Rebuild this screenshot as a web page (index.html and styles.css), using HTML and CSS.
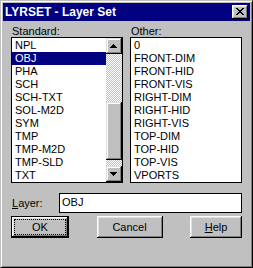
FILE: index.html
```html
<!DOCTYPE html>
<html lang="en">
<head>
    <meta charset="UTF-8">
    <title>LYRSET - Layer Set</title>
    <link rel="stylesheet" href="styles.css">
</head>
<body>
<!--dialog window-->
<div class="window">
    <!--title bar-->
    <div class="titlebar">
        <span class="title">LYRSET - Layer Set</span>
        <span class="close">
            <svg width="8" height="7" viewBox="0 0 8 7" shape-rendering="crispEdges">
                <rect x="0" y="0" width="2" height="1"/><rect x="6" y="0" width="2" height="1"/>
                <rect x="1" y="1" width="2" height="1"/><rect x="5" y="1" width="2" height="1"/>
                <rect x="2" y="2" width="4" height="1"/>
                <rect x="3" y="3" width="2" height="1"/>
                <rect x="2" y="4" width="4" height="1"/>
                <rect x="1" y="5" width="2" height="1"/><rect x="5" y="5" width="2" height="1"/>
                <rect x="0" y="6" width="2" height="1"/><rect x="6" y="6" width="2" height="1"/>
            </svg>
        </span>
    </div>
    <div class="content">
        <!--two lists-->
        <div class="lists">
            <div class="group">
                <div class="label">Standard:</div>
                <div class="listbox">
                    <ul class="items">
                        <li>NPL</li>
                        <li class="selected">OBJ</li>
                        <li>PHA</li>
                        <li>SCH</li>
                        <li>SCH-TXT</li>
                        <li>SOL-M2D</li>
                        <li>SYM</li>
                        <li>TMP</li>
                        <li>TMP-M2D</li>
                        <li>TMP-SLD</li>
                        <li>TXT</li>
                    </ul>
                    <div class="scrollbar">
                        <span class="sb_btn">
                            <svg width="7" height="4" viewBox="0 0 7 4" shape-rendering="crispEdges">
                                <rect x="3" y="0" width="1" height="1"/><rect x="2" y="1" width="3" height="1"/>
                                <rect x="1" y="2" width="5" height="1"/><rect x="0" y="3" width="7" height="1"/>
                            </svg>
                        </span>
                        <div class="sb_track"><span class="sb_thumb"></span></div>
                        <span class="sb_btn">
                            <svg width="7" height="4" viewBox="0 0 7 4" shape-rendering="crispEdges">
                                <rect x="0" y="0" width="7" height="1"/><rect x="1" y="1" width="5" height="1"/>
                                <rect x="2" y="2" width="3" height="1"/><rect x="3" y="3" width="1" height="1"/>
                            </svg>
                        </span>
                    </div>
                </div>
            </div>
            <div class="group">
                <div class="label">Other:</div>
                <div class="listbox">
                    <ul class="items">
                        <li>0</li>
                        <li>FRONT-DIM</li>
                        <li>FRONT-HID</li>
                        <li>FRONT-VIS</li>
                        <li>RIGHT-DIM</li>
                        <li>RIGHT-HID</li>
                        <li>RIGHT-VIS</li>
                        <li>TOP-DIM</li>
                        <li>TOP-HID</li>
                        <li>TOP-VIS</li>
                        <li>VPORTS</li>
                    </ul>
                </div>
            </div>
        </div>
        <!--layer name-->
        <div class="layer_row">
            <span class="layer_label"><u>L</u>ayer:</span>
            <div class="edit">OBJ</div>
        </div>
        <!--buttons-->
        <div class="buttons">
            <div class="btn btn_default"><span class="focus">OK</span></div>
            <div class="btn btn_cancel">Cancel</div>
            <div class="btn btn_help"><u>H</u>elp</div>
        </div>
    </div>
</div>
</body>
</html>
```

FILE: styles.css
```css
*{
    margin: 0;
    padding: 0;
    box-sizing: border-box;
}
body
{
    background: #c0c0c0;
    font-family: "Liberation Sans", Arial, sans-serif;
    font-size: 11px;
    color: #000;
}
ul
{
    list-style: none;
}
u
{
    text-underline-offset: 1px;
}
.window
{
    width: 253px;
    height: 268px;
    background: #c0c0c0;
    border: 1px solid;
    border-color: #c0c0c0 #000 #000 #c0c0c0;
    box-shadow: inset 1px 1px #fff, inset -1px -1px #808080;
    padding: 2px;
}
.titlebar
{
    height: 18px;
    background: #000080;
    display: flex;
    justify-content: space-between;
    align-items: flex-start;
    padding: 0 2px 0 2px;
}
.title
{
    color: #fff;
    font-weight: bold;
    font-size: 12px;
    line-height: 18px;
}
.close
{
    width: 16px;
    height: 14px;
    margin-top: 2px;
    background: #c0c0c0;
    box-shadow: inset -1px -1px #000, inset 1px 1px #fff, inset -2px -2px #808080, inset 2px 2px #dfdfdf;
    display: flex;
    align-items: center;
    justify-content: center;
    padding: 0 1px 1px 0;
}
.content
{
    padding: 4px 8px 0 8px;
}
.lists
{
    display: grid;
    grid-template-columns: 112px 112px;
    column-gap: 7px;
}
.label
{
    line-height: 12px;
    padding-left: 1px;
}
.listbox
{
    height: 146px;
    background: #fff;
    border: 1px solid #000;
    display: flex;
}
.items
{
    flex: 1;
    padding-top: 1px;
}
.items li
{
    line-height: 13px;
    height: 13px;
    padding-left: 3px;
    white-space: nowrap;
}
.items .selected
{
    background: #000080;
    color: #fff;
}
.scrollbar
{
    width: 16px;
    display: flex;
    flex-direction: column;
}
.sb_btn
{
    height: 16px;
    background: #c0c0c0;
    box-shadow: inset -1px -1px #000, inset 1px 1px #dfdfdf, inset -2px -2px #808080, inset 2px 2px #fff;
    display: flex;
    align-items: center;
    justify-content: center;
    padding: 0 1px 1px 0;
}
.sb_track
{
    flex: 1;
    background: repeating-conic-gradient(#c0c0c0 0 25%, #fff 0 50%) 0 0 / 2px 2px;
}
.sb_thumb
{
    display: block;
    height: 58px;
    margin-top: 48px;
    background: #c0c0c0;
    box-shadow: inset -1px -1px #000, inset 1px 1px #dfdfdf, inset -2px -2px #808080, inset 2px 2px #fff;
}
.layer_row
{
    display: flex;
    align-items: flex-start;
    margin-top: 10px;
}
.layer_label
{
    width: 48px;
    padding: 4px 0 0 1px;
    line-height: 13px;
}
.edit
{
    width: 183px;
    height: 20px;
    background: #fff;
    border: 1px solid #000;
    padding: 2px 0 0 2px;
    line-height: 13px;
}
.buttons
{
    display: flex;
    justify-content: space-between;
    margin-top: 3px;
}
.btn
{
    height: 22px;
    background: #c0c0c0;
    box-shadow: inset -1px -1px #000, inset 1px 1px #fff, inset -2px -2px #808080, inset 2px 2px #dfdfdf;
    display: flex;
    align-items: center;
    justify-content: center;
    line-height: 13px;
}
.btn_default
{
    width: 58px;
    border: 1px solid #000;
    padding: 2px;
}
.focus
{
    flex: 1;
    align-self: stretch;
    margin: 1px;
    outline: 1px dotted #000;
    display: flex;
    align-items: center;
    justify-content: center;
}
.btn_cancel
{
    width: 66px;
}
.btn_help
{
    width: 52px;
}
```
